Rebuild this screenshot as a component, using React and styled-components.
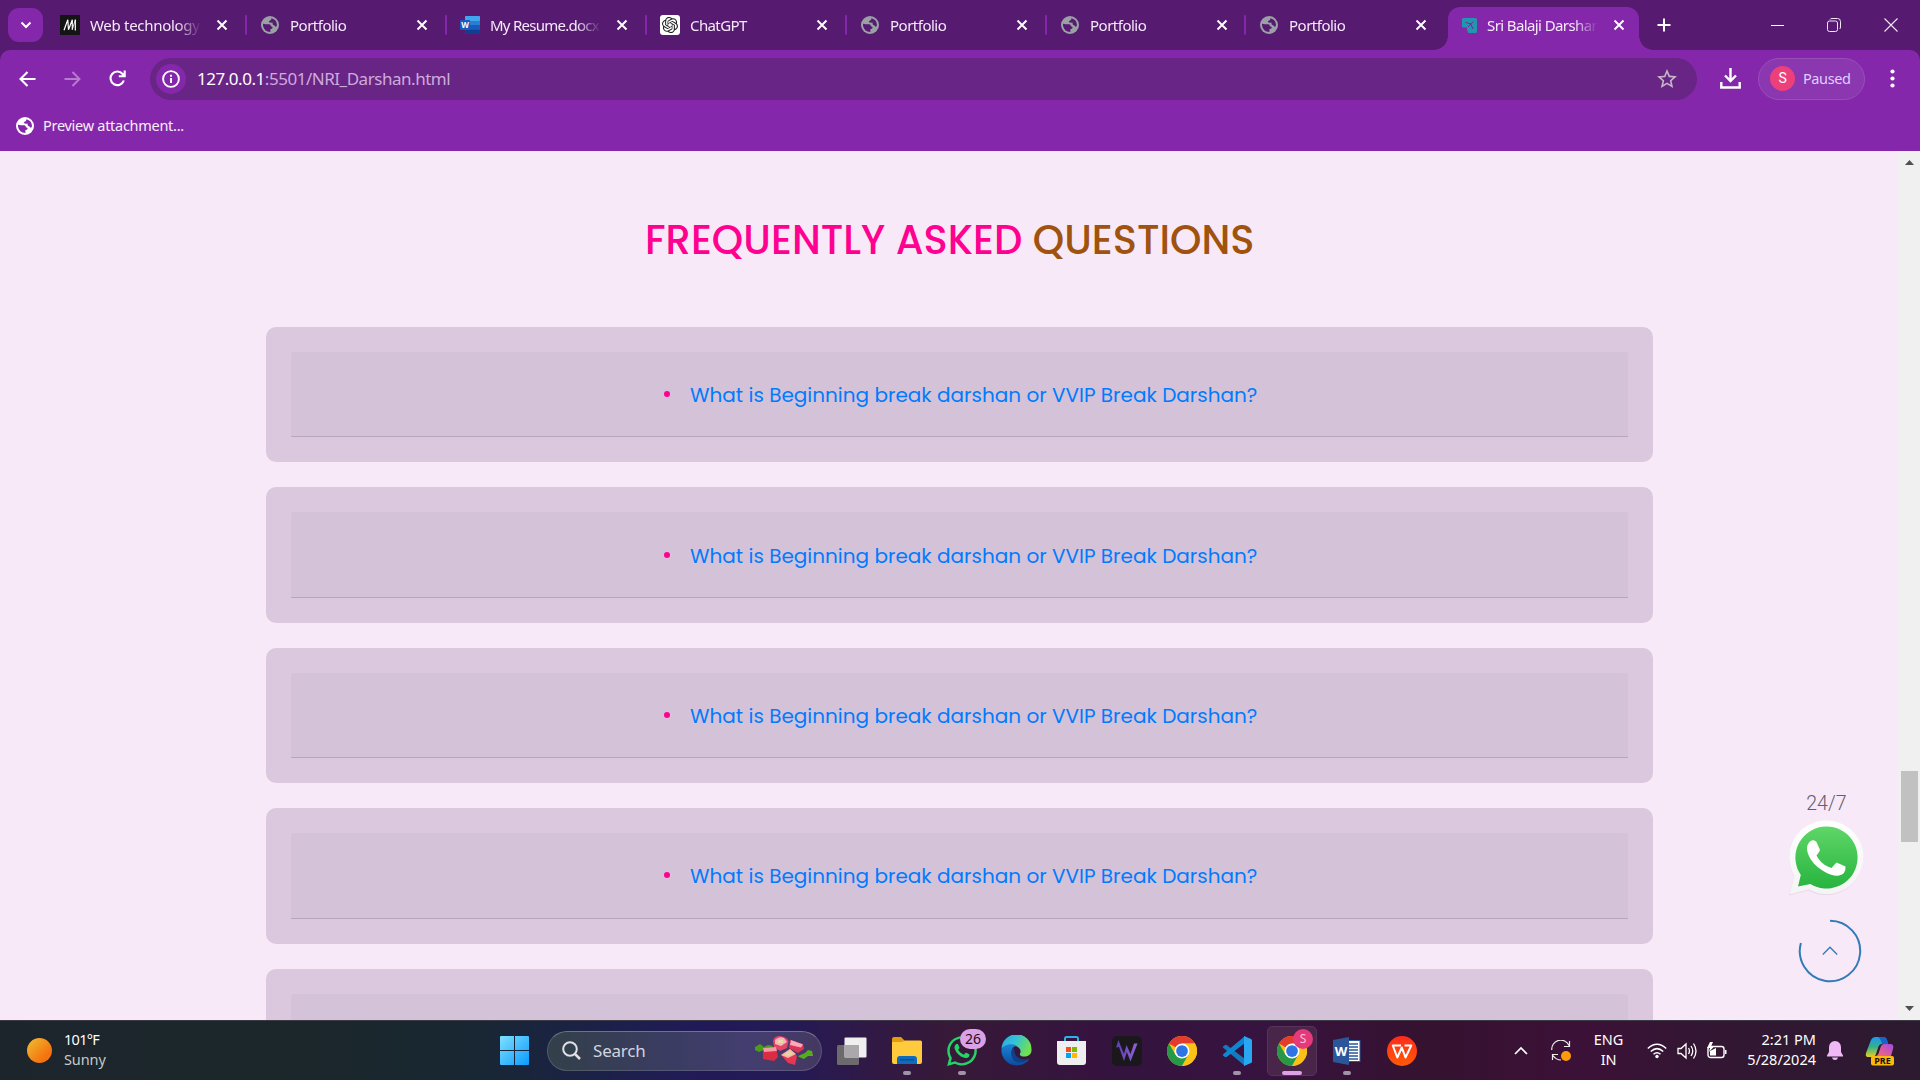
import React from 'react';
import styled, { createGlobalStyle, css } from 'styled-components';
import { SiOpenai } from 'react-icons/si';
import { FaWhatsapp } from 'react-icons/fa';
import { MdStarBorder } from 'react-icons/md';

const ui = `'Segoe UI', 'Noto Sans', 'Open Sans', sans-serif`;
const body = `Poppins, Inter, sans-serif`;

const GlobalStyle = createGlobalStyle`
  * { box-sizing: border-box; }
  html, body { margin: 0; padding: 0; overflow: hidden; }
  svg { display: block; flex: none; }
`;

const Screen = styled.div`
  width: 1920px;
  height: 1080px;
  display: flex;
  flex-direction: column;
  overflow: hidden;
  font-family: ${ui};
  background: #561a70;
`;

/* ---------- tab strip ---------- */
const TabStrip = styled.div`
  height: 50px;
  flex: none;
  display: flex;
  align-items: stretch;
  background: #561a70;
  padding-left: 8px;
`;

const TabSearch = styled.button`
  width: 35px;
  height: 34px;
  margin: 8px 5px 0 0;
  padding: 0;
  border: 0;
  border-radius: 11px;
  background: #8527ab;
  display: flex;
  align-items: center;
  justify-content: center;
`;

const Tab = styled.div`
  position: relative;
  width: ${(p) => p.$width}px;
  height: 50px;
  flex: none;
  display: flex;
  align-items: center;
  padding: 0 0 0 ${(p) => (p.$active ? 11 : 12)}px;
  ${(p) =>
    p.$active
      ? css`
          height: 43px;
          margin: 7px 0 0 1px;
          padding-bottom: 7px;
          background: #8527ab;
          border-radius: 12px 12px 0 0;
          &::before,
          &::after {
            content: '';
            position: absolute;
            bottom: 0;
            width: 14px;
            height: 14px;
          }
          &::before {
            left: -14px;
            background: radial-gradient(circle at 0 0, transparent 13.5px, #8527ab 14px);
          }
          &::after {
            right: -14px;
            background: radial-gradient(circle at 100% 0, transparent 13.5px, #8527ab 14px);
          }
        `
      : ''}
`;

const TabIcon = styled.div`
  width: 20px;
  height: 20px;
  flex: none;
  display: flex;
  align-items: center;
  justify-content: center;
  margin-right: ${(p) => p.$gap}px;
`;

const TabTitle = styled.div`
  width: 111px;
  flex: none;
  overflow: hidden;
  white-space: nowrap;
  font-size: 15px;
  line-height: 22px;
  color: #f6e9fa;
  letter-spacing: ${(p) => p.$spacing}px;
  padding-bottom: 1px;
  mask-image: linear-gradient(90deg, #000 78%, transparent 100%);
`;

const TabClose = styled.div`
  margin-left: ${(p) => p.$gap}px;
`;

const Separator = styled.div`
  width: 2px;
  height: 20px;
  margin: 0 1px 0 auto;
  border-radius: 1px;
  background: #8527ab;
`;

const NewTab = styled.div`
  width: 49px;
  display: flex;
  align-items: center;
  justify-content: center;
`;

const WindowButtons = styled.div`
  margin: 0 0 0 auto;
  display: flex;
`;

const WindowButton = styled.div`
  width: 57px;
  display: flex;
  align-items: center;
  justify-content: center;
  padding-right: 1px;
`;

/* ---------- toolbar ---------- */
const Toolbar = styled.div`
  height: 58px;
  flex: none;
  display: flex;
  align-items: center;
  padding: 0 10px 0 5px;
  background: #8527ab;
  border-radius: 10px 10px 0 0;
`;

const NavButton = styled.div`
  width: 45px;
  height: 44px;
  flex: none;
  display: flex;
  align-items: center;
  justify-content: center;
  padding-bottom: 1px;
`;

const Omnibox = styled.div`
  width: 1547px;
  height: 42px;
  flex: none;
  margin-left: 10px;
  padding: 0 18px 0 6px;
  border-radius: 21px;
  background: #692585;
  display: flex;
  align-items: center;
`;

const SiteInfo = styled.div`
  width: 30px;
  height: 30px;
  border-radius: 50%;
  background: #8527ab;
  display: flex;
  align-items: center;
  justify-content: center;
  margin-right: 11px;
`;

const Url = styled.div`
  flex: 1;
  font-size: 17px;
  letter-spacing: -0.47px;
  line-height: 24px;
  color: #cdabdc;
  span { color: #ffffff; }
`;

const Download = styled.div`
  width: 61px;
  display: flex;
  align-items: center;
  justify-content: center;
  padding: 0 0 2px 5px;
`;

const Profile = styled.div`
  width: 107px;
  height: 42px;
  padding-left: 11px;
  border: 1px solid #994dba;
  border-radius: 21px;
  background: #8b37b0;
  display: flex;
  align-items: center;
  gap: 8px;
  font-size: 14.5px;
  line-height: 20px;
  letter-spacing: -0.4px;
  padding-bottom: 2px;
  color: #ddd0ff;
`;

const Avatar = styled.div`
  width: 25px;
  height: 25px;
  border-radius: 50%;
  background: #ec407a;
  color: #fff;
  font: 14px/25px Roboto, sans-serif;
  text-align: center;
`;

const Menu = styled.div`
  flex: 1;
  display: flex;
  justify-content: center;
  padding: 0 0 2px 9px;
`;

const Bookmarks = styled.div`
  height: 43px;
  flex: none;
  display: flex;
  align-items: center;
  gap: 9px;
  padding: 0 0 8px 16px;
  background: #8527ab;
  color: #f8eefc;
`;

const BookmarkLabel = styled.span`
  padding-bottom: 2px;
  font-size: 14.5px;
  line-height: 20px;
  letter-spacing: -0.28px;
`;

/* ---------- page ---------- */
const Viewport = styled.div`
  height: 869px;
  flex: none;
  display: flex;
  position: relative;
  overflow: hidden;
  background: #f7e9f7;
`;

const Page = styled.main`
  width: 1898px;
  height: 869px;
  overflow: hidden;
  padding: 0 245px 0 266px;
  font-family: ${body};
`;

const Heading = styled.h2`
  margin: 0;
  padding: 59px 0 0 379px;
  height: 176px;
  font-size: 40px;
  font-weight: 500;
  line-height: 60px;
  color: #ff0090;
  white-space: nowrap;
  span { color: #a0520f; }
`;

const Card = styled.section`
  height: 135.4px;
  margin-bottom: 25px;
  padding: 25px;
  border-radius: 10px;
  background: #dbc8de;
`;

const Question = styled.div`
  height: 85.4px;
  border-bottom: 1px solid #baa5bf;
  border-radius: 3px 3px 0 0;
  background: #d4c2d8;
  display: flex;
  align-items: center;
  padding: 2px 0 0 373px;
`;

const Bullet = styled.i`
  width: 6px;
  height: 6px;
  margin-bottom: 2px;
  border-radius: 50%;
  background: #ff0090;
`;

const QuestionLink = styled.a`
  margin-left: 20px;
  color: #007bff;
  font-size: 20px;
  line-height: 30px;
  white-space: nowrap;
`;

const Scrollbar = styled.div`
  width: 22px;
  height: 869px;
  background: #f0f0f0;
  display: flex;
  flex-direction: column;
  align-items: center;
  padding: 9px 0 9px 1px;
`;

const Thumb = styled.div`
  width: 17px;
  height: 71px;
  margin: 606px 0 auto;
  background: #c1c1c1;
`;

const Floating = styled.aside`
  position: absolute;
  right: 51px;
  bottom: 37px;
  width: 85px;
  display: flex;
  flex-direction: column;
  align-items: center;
`;

const Hours = styled.div`
  font: 300 19.5px/24px Roboto, sans-serif;
  letter-spacing: 0.1px;
  color: #625d72;
  margin-bottom: 4px;
`;

const BigIcon = styled.div`
  margin-right: 2px;
`;

const ToTop = styled.div`
  margin: 23px 0 0 7px;
`;

/* ---------- taskbar ---------- */
const Taskbar = styled.footer`
  height: 60px;
  flex: none;
  display: flex;
  align-items: center;
  border-top: 1px solid #3c3b45;
  color: #fff;
  background: linear-gradient(
    90deg,
    #1c252b 0,
    #1b272c 340px,
    #182734 480px,
    #1c2148 600px,
    #211a58 700px,
    #241a55 790px,
    #321944 880px,
    #371938 950px,
    #35133f 1100px,
    #371340 1260px,
    #35122f 1430px,
    #3c1138 1580px,
    #331633 1700px,
    #2c1a30 1920px
  );
`;

const Weather = styled.div`
  width: 500px;
  display: flex;
  align-items: center;
  gap: 12px;
  padding: 0 0 3px 27px;
  font-size: 14.5px;
  line-height: 20px;
  letter-spacing: -0.7px;
`;

const Sun = styled.div`
  width: 25px;
  height: 25px;
  margin-top: 2px;
  border-radius: 50%;
  background: linear-gradient(135deg, #efb52d 10%, #f5720f 75%);
`;

const Sub = styled.div`
  color: #c5c9cc;
  letter-spacing: -0.1px;
`;

const Search = styled.div`
  width: 275px;
  height: 40px;
  margin: 0 2px 0 18px;
  padding: 0 7px 0 14px;
  border: 1px solid rgba(255, 255, 255, 0.14);
  border-top-color: rgba(255, 255, 255, 0.28);
  border-radius: 20px;
  background: linear-gradient(90deg, #33404a, #3a3c62 45%, #443e70 75%, #433861);
  display: flex;
  align-items: center;
  color: #d3d3de;
  font-size: 17px;
  letter-spacing: -0.2px;
`;

const SearchText = styled.span`
  flex: 1;
  margin-left: 12px;
`;

const AppSlot = styled.div`
  position: relative;
  width: 55px;
  height: 59px;
  flex: none;
  display: flex;
  align-items: center;
  justify-content: center;
`;

const ActiveTile = styled.div`
  width: 50px;
  height: 50px;
  border-radius: 5px;
  border: 1px solid #563358;
  background: #482549;
  display: flex;
  align-items: center;
  justify-content: center;
`;

const Indicator = styled.div`
  position: absolute;
  bottom: 5px;
  width: ${(p) => (p.$active ? 20 : 8)}px;
  height: 4px;
  border-radius: 2px;
  background: ${(p) => (p.$active ? '#dca0e6' : '#a294a8')};
`;

const Badge = styled.div`
  position: absolute;
  top: 8px;
  left: ${(p) => (p.$round ? 29 : 26)}px;
  width: ${(p) => (p.$round ? 20 : 26)}px;
  height: 20px;
  border-radius: 10px;
  background: ${(p) => (p.$round ? '#e5397a' : '#dca0e6')};
  color: ${(p) => (p.$round ? '#ffc2d8' : '#1b0f20')};
  font-size: ${(p) => (p.$round ? 12 : 14)}px;
  line-height: 20px;
  text-align: center;
`;

const Tray = styled.div`
  margin-left: auto;
  height: 59px;
  display: flex;
  align-items: center;
  padding-right: 14px;
`;

const TrayItem = styled.div`
  width: ${(p) => p.$width}px;
  display: flex;
  justify-content: center;
`;

const TrayText = styled.div`
  width: ${(p) => p.$width}px;
  padding-bottom: 3px;
  text-align: ${(p) => p.$align};
  font-size: 14.5px;
  line-height: 20px;
  letter-spacing: ${(p) => p.$spacing}px;
  white-space: nowrap;
`;

/* ---------- drawings ---------- */
const Globe = ({ color, hole }) => (
  <svg width="18" height="18" viewBox="0 0 18 18">
    <circle cx="9" cy="9" r="9" fill={color} />
    <path d="M2 7.800 5 8.200H8.300Q9.800 8.400 9.900 10.200 11.900 10.200 11.600 12 11.300 13 9.400 13.100V16Q3 15.600 2 9.500Z" fill={hole} />
    <path d="M10.500 2.200Q15.600 3.500 16 9 15.700 11 14.600 10.800 13.600 9.200 12 8.800 11.300 8 11.600 6.600 9.300 7 7.700 6 8.200 4.300 10 4Z" fill={hole} />
  </svg>
);

const Cross = () => (
  <svg width="12" height="12" viewBox="0 0 12 12" stroke="#fff" strokeWidth="1.900">
    <path d="M1.500 1.500 10.500 10.500M10.500 1.500 1.500 10.500" />
  </svg>
);

const MIcon = () => (
  <svg width="20" height="20" viewBox="0 0 20 20">
    <rect width="20" height="20" fill="#141414" />
    <path d="M4 15.200 7.800 4.800 8.500 14.800 12.300 4.800V14.800M15.300 4.500V15.400" fill="none" stroke="#fff" strokeWidth="1.200" />
    <path d="M12.300 14.500 15.300 5" stroke="#fff" strokeWidth=".8" />
  </svg>
);

const WordDoc = () => (
  <svg width="20" height="18" viewBox="0 0 20 18">
    <rect x="5" width="15" height="18" rx="1.200" fill="#2b7cd3" />
    <rect x="5" width="15" height="5" rx="1" fill="#41a5ee" />
    <rect x="5" y="9" width="15" height="4.500" fill="#185abd" />
    <rect x="5" y="13.400" width="15" height="4.600" rx="1" fill="#103f91" />
    <rect y="4" width="10" height="10" rx="1" fill="#185abd" />
    <text x="5" y="12" textAnchor="middle" fontFamily="Noto Sans" fontWeight="700" fontSize="8" fill="#fff">W</text>
  </svg>
);

const GptIcon = styled.div`
  width: 20px;
  height: 20px;
  border-radius: 3px;
  background: #fff;
  color: #222;
  display: flex;
  align-items: center;
  justify-content: center;
`;

const PlaneIcon = () => (
  <svg width="15" height="15" viewBox="0 0 15 15">
    <path d="M1.500 0H13.500Q15 0 15 1.500V13.500Q15 15 13.500 15H6.500L5 12V9.500H1.500Q0 9.500 0 8V1.500Q0 0 1.500 0Z" fill="#2196ad" />
    <path d="M11.500 3.500 6 9M3.500 4.300 8.800 6 11 11" stroke="#70289c" strokeWidth="1" fill="none" />
  </svg>
);

const BigWhatsapp = () => (
  <svg width="76" height="76" viewBox="0 0 76 76">
    <defs>
      <linearGradient id="wa" x1="0" y1="0" x2="0" y2="1">
        <stop offset="0" stopColor="#5fd668" />
        <stop offset="1" stopColor="#27b43e" />
      </linearGradient>
      <linearGradient id="waEdge" x1="0" y1="0" x2="0" y2="1">
        <stop offset="0" stopColor="#ffffff" />
        <stop offset="1" stopColor="#f5f3f5" />
      </linearGradient>
    </defs>
    <path d="M38.500 1A37 37 0 1 1 20.500 70.500L1 75.500 6 56.500A37 37 0 0 1 38.500 1Z" fill="#d9ccd9" opacity=".55" />
    <path d="M38.500 .500A36.800 36.800 0 1 1 20.800 69.500L1.500 74.500 6.300 56A36.800 36.800 0 0 1 38.500 .500Z" fill="url(#waEdge)" />
    <path d="M38.500 6.500A31 31 0 1 1 22.500 64L10 66.500 12.800 55A31 31 0 0 1 38.500 6.500Z" fill="url(#wa)" />
    <path d="M22 21.500Q26 19 28.500 22L32 30Q31.500 32 28.500 35.500C32 42 36.500 45.500 43.500 48Q46.500 44.500 48.500 42.500L57.500 46.500Q58 54 51 55.500C44 57 33 50.500 27.500 45 22 39.500 15 28 22 21.500Z" fill="#fff" />
  </svg>
);

const TopArrow = () => (
  <svg width="64" height="64" viewBox="0 0 64 64" fill="none" stroke="#337ab7">
    <path d="M32 1.800A30.200 30.200 0 1 1 2.900 23.900" strokeWidth="2" />
    <path d="M24.800 35.500 32 28.200 39.200 35.500" strokeWidth="1.300" />
  </svg>
);

const Rhubarb = () => (
  <svg width="60" height="30" viewBox="0 0 60 30">
    <path d="M1 11 6 8 10 11 14 9 19 10 16 15 10 14 5 16 1 14Z" fill="#4b9c1d" />
    <path d="M44 20 51 17 54 14 58 15 59 20 54 20 50 23 45 21Z" fill="#55ad1e" />
    <path d="M19 5Q20 0 26 0 33 1 34.500 5L33 12 26 15 20 11Z" fill="#e64368" />
    <path d="M21 4Q25 0 30 2L33 6 27 10 21 8Z" fill="#f9b5bd" />
    <path d="M24 4 29 4 29 7 24 7Z" fill="#e9d9a8" />
    <path d="M36 4 49 8 50 13 44 17 35 12Z" fill="#dc3458" />
    <path d="M37 4 49 8.500 47 11.500 36 9Z" fill="#f9a9b8" />
    <path d="M9 12 22 11 24 21 20 25 9 23Z" fill="#dc2c42" />
    <path d="M9 12 22 11 23 15 10 16Z" fill="#f39aa6" />
    <path d="M27 19 36 13 43 20 41 29 34 27Z" fill="#e33755" />
    <path d="M27 19 36 13 42 18 34 22Z" fill="#f7b9aa" />
    <path d="M30 18.500 36 15 39 18 34 20Z" fill="#e5d6a0" />
  </svg>
);

const WindowsLogo = () => (
  <svg width="29" height="29" viewBox="0 0 29 29">
    <defs>
      <linearGradient id="win" x1="0" y1="0" x2="1" y2="1">
        <stop offset="0" stopColor="#7fe0ff" />
        <stop offset="1" stopColor="#0a9bff" />
      </linearGradient>
    </defs>
    <path d="M0 1Q0 0 1 0H14V14H0ZM15 0H28Q29 0 29 1V14H15ZM0 15H14V29H1Q0 29 0 28ZM15 15H29V28Q29 29 28 29H15Z" fill="url(#win)" />
  </svg>
);

const TaskView = () => (
  <svg width="30" height="30" viewBox="0 0 30 30">
    <rect x="0" y="9" width="22" height="20" rx="1.500" fill="#6c6a6c" />
    <rect x="7.500" y="1.500" width="22" height="20" rx="1" fill="#efefef" />
    <rect x="7.500" y="9" width="14.500" height="12.500" fill="#aaa8aa" />
  </svg>
);

const Folder = () => (
  <svg width="30" height="28" viewBox="0 0 30 28">
    <path d="M0 2Q0 0 2 0H9L13 4H20V9H0Z" fill="#e29c0c" />
    <path d="M0 5H10L13 3.500H28.500Q30 3.500 30 5V25Q30 27 28 27H2Q0 27 0 25Z" fill="#ffca3b" />
    <path d="M5 27V22Q5 19 8 19H22Q25 19 25 22V27Z" fill="#0f6cbd" />
    <path d="M8 22.800H22" stroke="#0a4a8a" strokeWidth="1.200" />
  </svg>
);

const Edge = () => (
  <svg width="31" height="31" viewBox="0 0 31 31">
    <defs>
      <linearGradient id="edA" x1="0" y1="0" x2="1" y2=".4">
        <stop offset="0" stopColor="#2aa6e0" />
        <stop offset=".5" stopColor="#35c3d6" />
        <stop offset="1" stopColor="#6fe052" />
      </linearGradient>
      <linearGradient id="edB" x1="0" y1="0" x2="0" y2="1">
        <stop offset="0" stopColor="#1a84d6" />
        <stop offset="1" stopColor="#0c4b9c" />
      </linearGradient>
    </defs>
    <path d="M.500 14A15 15 0 0 1 30.500 14.500C31 20 26 22 22 21.500 19 21 18 19.500 19.500 17.500 20.500 13 15 10 10 10 5 10 2 12 .500 14Z" fill="url(#edA)" />
    <path d="M.500 14.500C3 9 12 8 16 11 11 11 9 17 12 23 15 28 22 28 28.500 23.500 24 32 8 34 2 22Q0 18 .500 14.500Z" fill="url(#edB)" />
    <path d="M13 13C10 15 9 20 12.500 25 16 29 23 28 28.500 23.500 23 26 16 24 14 18.500Q13 16 13 13Z" fill="#123f8a" />
  </svg>
);

const Store = () => (
  <svg width="29" height="30" viewBox="0 0 29 30">
    <path d="M8 7V2.500Q8 1 9.500 1H19.500Q21 1 21 2.500V7" fill="none" stroke="#2fb0e8" strokeWidth="2" />
    <path d="M0 5H29V26Q29 29 26 29H3Q0 29 0 26Z" fill="#efefef" />
    <path d="M9 11H14V16H9Z" fill="#f25022" />
    <path d="M15 11H20V16H15Z" fill="#7fba00" />
    <path d="M9 17H14V22H9Z" fill="#00a4ef" />
    <path d="M15 17H20V22H15Z" fill="#ffb900" />
  </svg>
);

const Bolt = () => (
  <svg width="30" height="30" viewBox="0 0 30 30">
    <defs>
      <linearGradient id="bolt" x1="0" y1="0" x2="1" y2="0">
        <stop offset="0" stopColor="#5a3fb0" />
        <stop offset="1" stopColor="#9262d8" />
      </linearGradient>
    </defs>
    <rect width="30" height="30" rx="5" fill="#1b181c" />
    <path d="M4 11.500 6.500 4 8.500 9.500 12 18 14.500 9 18.500 18 22 7.500H25.500L18.500 25.500 14.800 16 12 25 7 11Z" fill="url(#bolt)" />
  </svg>
);

const Chrome = () => (
  <svg width="30" height="30" viewBox="0 0 48 48">
    <circle cx="24" cy="24" r="24" fill="#fbc116" />
    <path d="M24 24 3.200 12A24 24 0 0 1 44.800 12H24Z" fill="#e33b2e" />
    <path d="M3.200 12A24 24 0 0 0 24 48L34.400 30 24 24 13.600 30Z" fill="#279847" />
    <path d="M24 48 34.400 30Q37 24 33 15L24 12H44.800A24 24 0 0 1 24 48Z" fill="#fbc116" />
    <circle cx="24" cy="24" r="12" fill="#fff" />
    <circle cx="24" cy="24" r="9.400" fill="#2f74e4" />
  </svg>
);

const VsCode = () => (
  <svg width="30" height="30" viewBox="0 0 30 30">
    <path d="M1 10.500 3 9Q4 8.500 5 9.300L23 23V30L1.200 11.800Q.500 11 1 10.500Z" fill="#1479bd" />
    <path d="M1 19.500 3 21Q4 21.500 5 20.700L23 7V0L1.200 18.200Q.500 19 1 19.500Z" fill="#0f86d1" />
    <path d="M22 0 29 3Q30 3.500 30 4.500V25.500Q30 26.500 29 27L22 30Z" fill="#2aa7f2" />
  </svg>
);

const Word = () => (
  <svg width="28" height="28" viewBox="0 0 28 28">
    <rect x="12" y="3.500" width="15" height="21" fill="#fff" stroke="#2b579a" />
    <path d="M15 7H25M15 10H25M15 13H25M15 16H25M15 19H25M15 22H25" stroke="#2b579a" strokeWidth="1.300" />
    <path d="M0 3 16 0V28L0 25Z" fill="#2b579a" />
    <text x="8" y="19" textAnchor="middle" fontFamily="Noto Sans" fontWeight="700" fontSize="13" fill="#fff">W</text>
  </svg>
);

const Wps = () => (
  <svg width="30" height="30" viewBox="0 0 30 30">
    <defs>
      <linearGradient id="wps" x1="0" y1="0" x2="0" y2="1">
        <stop offset="0" stopColor="#ff2a1d" />
        <stop offset="1" stopColor="#ff5a05" />
      </linearGradient>
    </defs>
    <circle cx="15" cy="15" r="15" fill="url(#wps)" />
    <path d="M14 9.500H5.800L10.300 21.500 14.800 11.500 18.500 21.500 24.300 9.500H17.500" fill="none" stroke="#fff" strokeWidth="2" strokeLinejoin="round" />
  </svg>
);

const Copilot = () => (
  <svg width="30" height="30" viewBox="0 0 30 30">
    <defs>
      <linearGradient id="cpA" x1="0" y1="0" x2="0" y2="1">
        <stop offset="0" stopColor="#1a9af0" />
        <stop offset=".5" stopColor="#35b08a" />
        <stop offset="1" stopColor="#e8d020" />
      </linearGradient>
      <linearGradient id="cpB" x1="1" y1="0" x2="0" y2="1">
        <stop offset="0" stopColor="#a04be8" />
        <stop offset="1" stopColor="#ff6a6a" />
      </linearGradient>
    </defs>
    <path d="M6 4Q7.500 1 10 1H18Q21 1 22 4L23 8H17Q14 8 13 12L11 18Q10 21 7 21H3Q0 21 1 17Z" fill="url(#cpA)" />
    <path d="M13 1H18Q21 1 22 4L23 8H17Q16 3 13 1Z" fill="#1763c8" />
    <path d="M19 8H25Q29.500 8 28 13L26 20H10Q13 20 14 16L16 10Q17 8 19 8Z" fill="url(#cpB)" />
    <rect x="6" y="20" width="23" height="9.500" rx="2" fill="#fbb80f" />
    <text x="17.500" y="28" textAnchor="middle" fontFamily="Noto Sans" fontWeight="700" fontSize="9" fill="#1a1208">PRE</text>
  </svg>
);

const grayGlobe = <Globe color="#9aa0a6" hole="#561a70" />;
const tabs = [
  { title: 'Web technology', icon: <MIcon />, width: 200, spacing: -0.3 },
  { title: 'Portfolio', icon: grayGlobe, width: 200, spacing: -0.5 },
  { title: 'My Resume.docx', icon: <WordDoc />, width: 200, spacing: -0.75 },
  { title: 'ChatGPT', icon: <GptIcon><SiOpenai size={16} /></GptIcon>, width: 200, spacing: -0.6 },
  { title: 'Portfolio', icon: grayGlobe, width: 200, spacing: -0.5 },
  { title: 'Portfolio', icon: grayGlobe, width: 199, spacing: -0.5 },
  { title: 'Portfolio', icon: grayGlobe, width: 200, spacing: -0.5, last: true },
];

const apps = [
  { icon: <TaskView /> },
  { icon: <Folder />, open: true },
  { icon: <FaWhatsapp size={34} color="#25d366" />, open: true, badge: '26' },
  { icon: <Edge /> },
  { icon: <Store /> },
  { icon: <Bolt /> },
  { icon: <Chrome /> },
  { icon: <VsCode />, open: true },
  { icon: <Chrome />, open: true, active: true, badge: 'S' },
  { icon: <Word />, open: true },
  { icon: <Wps /> },
];

export default function App() {
  return (
    <Screen>
      <GlobalStyle />
      <TabStrip>
        <TabSearch>
          <svg width="12" height="8" viewBox="0 0 12 8" fill="none" stroke="#fff" strokeWidth="2">
            <path d="M1.500 1.500 6 6 10.500 1.500" />
          </svg>
        </TabSearch>
        {tabs.map((t, i) => (
          <Tab key={i} $width={t.width}>
            <TabIcon $gap={10}>{t.icon}</TabIcon>
            <TabTitle $spacing={t.spacing}>{t.title}</TabTitle>
            <TabClose $gap={15}><Cross /></TabClose>
            {!t.last && <Separator />}
          </Tab>
        ))}
        <Tab $active $width={191}>
          <TabIcon $gap={8}><PlaneIcon /></TabIcon>
          <TabTitle $spacing={-0.6}>Sri Balaji Darshan</TabTitle>
          <TabClose $gap={15}><Cross /></TabClose>
        </Tab>
        <NewTab>
          <svg width="14" height="14" viewBox="0 0 14 14" stroke="#fff" strokeWidth="2">
            <path d="M7 0.500V13.500M0.500 7H13.500" />
          </svg>
        </NewTab>
        <WindowButtons>
          <WindowButton>
            <svg width="13" height="13" viewBox="0 0 13 13" stroke="#fff"><path d="M0 6.500H13" /></svg>
          </WindowButton>
          <WindowButton>
            <svg width="14" height="14" viewBox="0 0 14 14" stroke="#f3e8f7" fill="none">
              <rect x="0.500" y="3" width="10" height="10.500" rx="2" />
              <path d="M3 1.500Q3.500 0.500 5 0.500H10.500Q13.500 0.500 13.500 3.500V9Q13.500 10.500 12.500 11" />
            </svg>
          </WindowButton>
          <WindowButton>
            <svg width="14" height="14" viewBox="0 0 14 14" stroke="#f3e8f7" strokeWidth="1.100"><path d="M.500 .500 13.500 13.500M13.500 .500 .500 13.500" /></svg>
          </WindowButton>
        </WindowButtons>
      </TabStrip>

      <Toolbar>
        <NavButton>
          <svg width="17" height="16" viewBox="0 0 17 16" fill="none" stroke="#fff" strokeWidth="2.100"><path d="M16.500 8H2M8.500 1 1.500 8 8.500 15" /></svg>
        </NavButton>
        <NavButton>
          <svg width="17" height="16" viewBox="0 0 17 16" fill="none" stroke="#b77cd0" strokeWidth="1.900"><path d="M.500 8H15M8.500 1 15.500 8 8.500 15" /></svg>
        </NavButton>
        <NavButton>
          <svg width="17" height="17" viewBox="0 0 17 17" fill="none" stroke="#fff" strokeWidth="2.100">
            <path d="M14.800 10.500A6.800 6.800 0 1 1 13.600 4L15.500 6.200M15.700 .500V6.300H9.800" />
          </svg>
        </NavButton>
        <Omnibox>
          <SiteInfo>
            <svg width="18" height="18" viewBox="0 0 18 18" fill="none" stroke="#fff" strokeWidth="1.900">
              <circle cx="9" cy="9" r="7.900" /><path d="M9 8V13M9 4.800V6.700" />
            </svg>
          </SiteInfo>
          <Url><span>127.0.0.1</span>:5501/NRI_Darshan.html</Url>
          <MdStarBorder size={24} color="#c4b8c8" />
        </Omnibox>
        <Download>
          <svg width="21" height="21" viewBox="0 0 21 21" fill="none" stroke="#fff" strokeWidth="2.400">
            <path d="M10.500 0V12M5 7.500 10.500 13 16 7.500M1.300 14V19.500H19.700V14" />
          </svg>
        </Download>
        <Profile><Avatar>S</Avatar>Paused</Profile>
        <Menu>
          <svg width="5" height="19" viewBox="0 0 5 19" fill="#fff"><circle cx="2.500" cy="2.500" r="2.100" /><circle cx="2.500" cy="9.500" r="2.100" /><circle cx="2.500" cy="16.500" r="2.100" /></svg>
        </Menu>
      </Toolbar>
      <Bookmarks>
        <Globe color="#fff" hole="#8527ab" />
        <BookmarkLabel>Preview attachment...</BookmarkLabel>
      </Bookmarks>

      <Viewport>
        <Page>
          <Heading>FREQUENTLY ASKED <span>QUESTIONS</span></Heading>
          {[0, 1, 2, 3, 4].map((n) => (
            <Card key={n}>
              <Question>
                <Bullet />
                <QuestionLink>What is Beginning break darshan or VVIP Break Darshan?</QuestionLink>
              </Question>
            </Card>
          ))}
        </Page>
        <Scrollbar>
          <svg width="9" height="5" viewBox="0 0 9 5"><path d="M0 5 4.500 0 9 5Z" fill="#505050" /></svg>
          <Thumb />
          <svg width="9" height="5" viewBox="0 0 9 5"><path d="M0 0 4.500 5 9 0Z" fill="#505050" /></svg>
        </Scrollbar>
        <Floating>
          <Hours>24/7</Hours>
          <BigIcon><BigWhatsapp /></BigIcon>
          <ToTop><TopArrow /></ToTop>
        </Floating>
      </Viewport>

      <Taskbar>
        <Weather>
          <Sun />
          <div>
            <div>101°F</div>
            <Sub>Sunny</Sub>
          </div>
        </Weather>
        <WindowsLogo />
        <Search>
          <svg width="19" height="19" viewBox="0 0 19 19" fill="none" stroke="#e0e0e6" strokeWidth="2"><circle cx="8" cy="8" r="6.800" /><path d="M13 13 18 18" strokeWidth="2.500" /></svg>
          <SearchText>Search</SearchText>
          <Rhubarb />
        </Search>
        {apps.map((a, i) => (
          <AppSlot key={i}>
            {a.active ? <ActiveTile>{a.icon}</ActiveTile> : a.icon}
            {a.badge && <Badge $round={a.badge === 'S'}>{a.badge}</Badge>}
            {a.open && <Indicator $active={a.active} />}
          </AppSlot>
        ))}
        <Tray>
          <TrayItem $width={40}>
            <svg width="14" height="9" viewBox="0 0 14 9" fill="none" stroke="#fff" strokeWidth="1.700"><path d="M1 8 7 2 13 8" /></svg>
          </TrayItem>
          <TrayItem $width={40}>
            <svg width="20" height="21" viewBox="0 0 20 21" fill="none" stroke="#eee" strokeWidth="1.200">
              <path d="M.800 10A9 9 0 0 1 18 5.500M18.500 1V6.500H13M1.500 20V14.500H7M2 15.500Q5 20 10 20" />
              <circle cx="15" cy="16" r="5" fill="#ff9a0a" stroke="none" />
            </svg>
          </TrayItem>
          <TrayText $width={55} $align="center" $spacing={-0.1}>ENG<br />IN</TrayText>
          <TrayItem $width={41}>
            <svg width="20" height="16" viewBox="0 0 20 16" fill="none" stroke="#fff" strokeWidth="1.500">
              <path d="M.800 5.500Q10-3 19.200 5.500M3.800 8.500Q10 2.800 16.200 8.500M6.500 11.300Q10 8.200 13.500 11.300" /><circle cx="10" cy="13.500" r="1.700" fill="#fff" stroke="none" />
            </svg>
          </TrayItem>
          <TrayItem $width={19}>
            <svg width="20" height="18" viewBox="0 0 20 18" fill="none" stroke="#fff" strokeWidth="1.300">
              <path d="M1 6.500H4L9 2V16L4 11.500H1ZM11.500 6Q13.500 9 11.500 12M14 4Q17.500 9 14 14M16.500 1.500Q21.500 9 16.500 16.500" />
            </svg>
          </TrayItem>
          <TrayItem $width={41}>
            <svg width="20" height="17" viewBox="0 0 20 17">
              <rect x="1" y="4.500" width="16" height="11" rx="2.500" fill="none" stroke="#fff" strokeWidth="1.400" />
              <path d="M18 8H19.500V12H18ZM3 13.500V9L9 6V13.500Z" fill="#fff" />
              <path d="M3 0 0 6H3L2 10 7 4.500H4L6 0Z" fill="#fff" />
            </svg>
          </TrayItem>
          <TrayText $width={79} $align="right" $spacing={0}>2:21 PM<br />5/28/2024</TrayText>
          <TrayItem $width={38}>
            <svg width="16" height="19" viewBox="0 0 16 19" fill="#f0b8f5"><path d="M8 0Q13.500 .500 14 6V11L16 14.500V15.500H0V14.500L2 11V6Q2.500 .500 8 0ZM5 16.500H11Q10.500 19 8 19 5.500 19 5 16.500Z" /></svg>
          </TrayItem>
          <TrayItem $width={52}><Copilot /></TrayItem>
        </Tray>
      </Taskbar>
    </Screen>
  );
}
